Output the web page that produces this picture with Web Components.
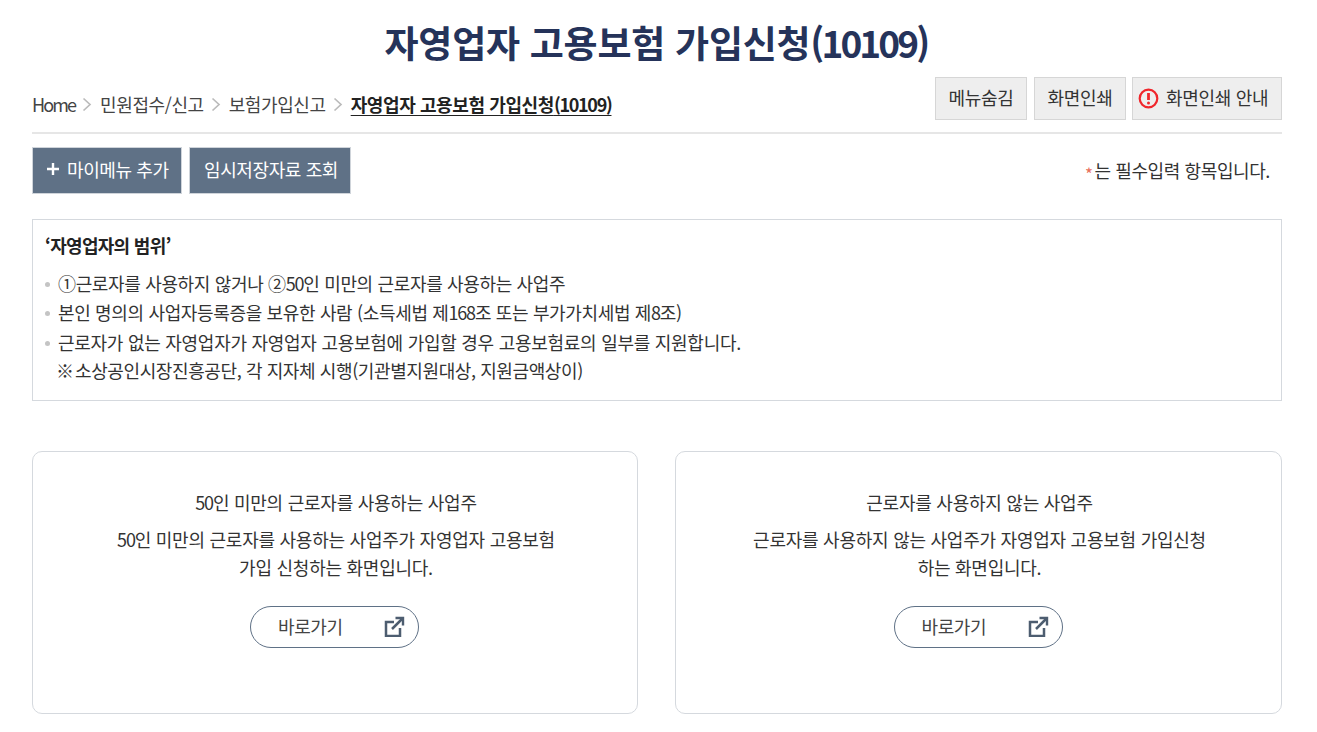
<!DOCTYPE html>
<html lang="ko">
<head>
<meta charset="utf-8">
<title>자영업자 고용보험 가입신청</title>
<style>
	html, body { margin: 0; background: #fff; }
	body {
		font-family: "Noto Sans CJK KR", "Noto Sans", sans-serif;
		color: #333;
	}
</style>
</head>
<body>
<script>
const KR_FONT = `"Noto Sans CJK KR", "Noto Sans", sans-serif`

class AppPage extends HTMLElement {
	constructor() {
		super()
		this.attachShadow({ mode: "open" }).innerHTML = `
<style>
	:host { display: block; padding: 0 35px 0 32px; font-family: ${KR_FONT}; }
	h1 {
		margin: 0;
		padding: 18px 2px 0 0;
		height: 77px;
		box-sizing: border-box;
		text-align: center;
		font-size: 37px;
		line-height: 48px;
		font-weight: 700;
		color: #25335a;
		letter-spacing: -0.25px;
	}
	h1 span { letter-spacing: -2.85px; }
	.cards {
		display: grid;
		grid-template-columns: 606px 607px;
		gap: 37px;
		margin-top: 50px;
	}
</style>
<h1>자영업자 고용보험 가입신청<span>(10109)</span></h1>
<page-head></page-head>
<page-actions></page-actions>
<info-box></info-box>
<div class="cards">
	<link-card heading="<i>50</i>인 미만의 근로자를 사용하는 사업주"><i>50</i>인 미만의 근로자를 사용하는 사업주가 자영업자 고용보험<br>가입 신청하는 화면입니다.</link-card>
	<link-card heading="근로자를 사용하지 않는 사업주">근로자를 사용하지 않는 사업주가 자영업자 고용보험 가입신청<br>하는 화면입니다.</link-card>
</div>`
	}
}

class PageHead extends HTMLElement {
	constructor() {
		super()
		const chevron = `<svg width="10" height="15" viewBox="0 0 10 15"><path d="M1.500 1.500 8 7.500l-6.500 6" fill="none" stroke="#bbb" stroke-width="1.700"/></svg>`
		this.attachShadow({ mode: "open" }).innerHTML = `
<style>
	:host {
		display: flex;
		justify-content: space-between;
		align-items: flex-start;
		height: 57px;
		box-sizing: border-box;
		border-bottom: 2px solid #e6e6e6;
		letter-spacing: -0.4px;
	}
	nav { display: flex; align-items: center; gap: 7px; padding-top: 15px; font-size: 18px; line-height: 25px; color: #444; }
	nav span { margin-left: 1px; }
	nav b { color: #222; font-weight: 700; margin-left: 1px; text-decoration: underline; text-underline-offset: 3px; }
	nav i { font-style: normal; letter-spacing: -1.300px; }
	nav .home { margin-left: 0; letter-spacing: -1.900px; }
	.tools { display: flex; gap: 6px; }
	.tools button {
		height: 43px;
		padding: 0 5px 4px;
		border: 1px solid #d6d6d6;
		background: #eee;
		font: 400 18px ${KR_FONT};
		letter-spacing: -0.3px;
		color: #333;
		white-space: nowrap;
		display: flex;
		align-items: center;
		justify-content: center;
		gap: 7px;
	}
	.tools button:first-child { margin-right: 1px; }
	.tools svg { position: relative; top: 2px; }
</style>
<nav>
	<span class="home">Home</span>${chevron}<span>민원접수/신고</span>${chevron}<span>보험가입신고</span>${chevron}<b>자영업자 고용보험 가입신청<i>(10109)</i></b>
</nav>
<div class="tools">
	<button style="width:92px">메뉴숨김</button>
	<button style="width:92px">화면인쇄</button>
	<button style="width:150px;justify-content:flex-start">
		<svg width="21" height="21" viewBox="0 0 21 21"><circle cx="10.500" cy="10.500" r="8.800" fill="none" stroke="#f0262c" stroke-width="2.200"/><path d="M10.500 5v7" stroke="#f0262c" stroke-width="2.800"/><circle cx="10.500" cy="15" r="1.500" fill="#f0262c"/></svg>
		화면인쇄 안내
	</button>
</div>`
	}
}

class PageActions extends HTMLElement {
	constructor() {
		super()
		this.attachShadow({ mode: "open" }).innerHTML = `
<style>
	:host {
		display: flex;
		align-items: flex-start;
		gap: 7px;
		padding-top: 13px;
		height: 85px;
		box-sizing: border-box;
	}
	button {
		height: 47px;
		border: 1px solid #cfd4da;
		background: #5f7186;
		color: #fff;
		font: 400 18px ${KR_FONT};
		letter-spacing: -0.4px;
		white-space: nowrap;
		padding: 0 0 3px 14px;
		display: flex;
		align-items: center;
		gap: 8px;
	}
	.note {
		margin-left: auto;
		padding: 11px 12px 0 0;
		font-size: 18px;
		line-height: 25px;
		letter-spacing: -0.4px;
		color: #333;
	}
	.note i { color: #e8705c; font-style: normal; font-size: 17px; margin-right: 2px; position: relative; top: 3px; }
</style>
<button style="width:150px"><svg width="12" height="12" viewBox="0 0 12 12"><path d="M6 0v12M0 6h12" stroke="#fff" stroke-width="2.400"/></svg>마이메뉴 추가</button>
<button style="width:162px;padding-left:2px;justify-content:center">임시저장자료 조회</button>
<div class="note"><i>*</i>는 필수입력 항목입니다.</div>`
	}
}

class InfoBox extends HTMLElement {
	constructor() {
		super()
		this.attachShadow({ mode: "open" }).innerHTML = `
<style>
	:host {
		display: block;
		height: 182px;
		box-sizing: border-box;
		border: 1px solid #d5d9de;
		padding: 12px 12px 0;
		font-size: 18px;
		letter-spacing: -0.35px;
		color: #333;
	}
	h2 { margin: 0 0 11px; font-size: 18px; line-height: 26px; font-weight: 700; color: #222; letter-spacing: -0.7px; }
	ul { list-style: none; margin: 0; padding: 0; }
	li { position: relative; padding-left: 13px; line-height: 29px; }
	li:nth-child(3) { margin-top: 1px; letter-spacing: -0.27px; }
	li::before {
		content: "";
		position: absolute;
		left: 0;
		top: 13px;
		width: 5px;
		height: 5px;
		border-radius: 50%;
		background: #c4c4c4;
	}
	li span { display: block; line-height: 28px; margin-top: -1px; letter-spacing: -0.4px; }
	li span b { font-weight: 400; margin-left: -2px; letter-spacing: -2px; }
	i { font-style: normal; letter-spacing: -1.200px; }
</style>
<h2>‘자영업자의 범위’</h2>
<ul>
	<li>①근로자를 사용하지 않거나 ②<i>50</i>인 미만의 근로자를 사용하는 사업주</li>
	<li>본인 명의의 사업자등록증을 보유한 사람 (소득세법 제<i>168</i>조 또는 부가가치세법 제<i>8</i>조)</li>
	<li>근로자가 없는 자영업자가 자영업자 고용보험에 가입할 경우 고용보험료의 일부를 지원합니다.<span><b>※ </b>소상공인시장진흥공단, 각 지자체 시행(기관별지원대상, 지원금액상이)</span></li>
</ul>`
	}
}

const linkCardTemplate = document.createElement("template")
linkCardTemplate.innerHTML = `
<style>
	:host {
		display: flex;
		flex-direction: column;
		align-items: center;
		height: 263px;
		box-sizing: border-box;
		border: 1px solid #d5d9de;
		border-radius: 10px;
		padding-top: 36px;
		text-align: center;
		font-size: 18px;
		letter-spacing: -0.25px;
		color: #333;
	}
	h3 { margin: 0 0 9px; padding-left: 2px; font-size: 18px; line-height: 28px; font-weight: 400; }
	h3 i { font-style: normal; letter-spacing: -1.200px; }
	::slotted(i) { font-style: normal; letter-spacing: -1.200px; }
	p { margin: 0 0 25px; padding-left: 2px; line-height: 28px; }
	a {
		display: flex;
		align-items: center;
		justify-content: space-between;
		box-sizing: border-box;
		width: 169px;
		height: 42px;
		margin-right: 1px;
		padding: 0 13px 2px 27px;
		border: 1px solid #5f7186;
		border-radius: 21px;
		color: #444;
		letter-spacing: -0.4px;
		text-decoration: none;
	}
</style>
<h3></h3>
<p><slot></slot></p>
<a href="#">바로가기
	<svg width="21" height="21" viewBox="0 0 21 21" fill="none" stroke="#4d5d70" stroke-width="2.500"><path d="M10 6H2v14h14v-8"/><path d="M8 13 18 3"/><path d="M11.500 2H19v7.500" stroke-width="2.400"/></svg>
</a>`

class LinkCard extends HTMLElement {
	constructor() {
		super()
		const root = this.attachShadow({ mode: "open" })
		root.appendChild(linkCardTemplate.content.cloneNode(true))
		root.querySelector("h3").innerHTML = this.getAttribute("heading")
	}
}

customElements.define("page-head", PageHead)
customElements.define("page-actions", PageActions)
customElements.define("info-box", InfoBox)
customElements.define("link-card", LinkCard)
customElements.define("app-page", AppPage)
document.body.appendChild(document.createElement("app-page"))
</script>
</body>
</html>
